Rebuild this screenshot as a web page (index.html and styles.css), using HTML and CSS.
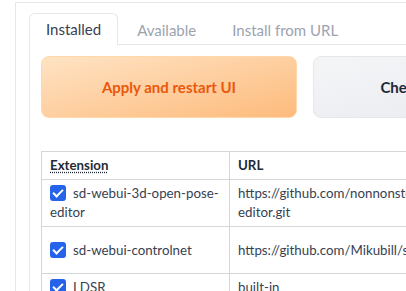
FILE: index.html
```html
<!DOCTYPE html>
<html>
<head>
<title>Extensions</title>
<meta content="width=device-width, initial-scale=1" name="viewport" />
<link rel="stylesheet" href="styles.css">
</head>

<body>
<div class='block'>
  <div class='tab-nav'>
    <button class='tab selected'>Installed</button>
    <button class='tab'>Available</button>
    <button class='tab'>Install from URL</button>
  </div>

  <div class='tab-panel'>
    <div class='btn-row'>
      <button class='btn btn-primary'>Apply and restart UI</button>
      <button class='btn btn-secondary'>Check for updates</button>
    </div>

    <table class='ext-table'>
      <thead>
        <tr>
          <th class='col-name'><abbr title='Use checkbox to enable the extension'>Extension</abbr></th>
          <th class='col-url'>URL</th>
          <th>Version</th>
        </tr>
      </thead>
      <tbody>
        <tr>
          <td><span class='check'></span>sd-webui-3d-open-pose-editor</td>
          <td>https://github.com/nonnonstop/sd-webui-3d-open-pose-editor.git</td>
          <td>8a9b1c2e</td>
        </tr>
        <tr class='row-tall'>
          <td><span class='check'></span>sd-webui-controlnet</td>
          <td>https://github.com/Mikubill/sd-webui-controlnet</td>
          <td>2c3e9f1a</td>
        </tr>
        <tr>
          <td><span class='check'></span>LDSR</td>
          <td>built-in</td>
          <td></td>
        </tr>
      </tbody>
    </table>
  </div>
</div>
</body>

</html>
```

FILE: styles.css
```css
html, body {
  margin: 0;
  padding: 0;
  overflow: hidden;
  background: #fff;
  font-family: "Lato", "Liberation Sans", sans-serif;
}
body {
  padding: 2px 0 0 15px;
}
.block {
  width: 760px;
  border: 1px solid #e5e7eb;
  padding: 10px 13px 20px;
}

/* tabs */
.tab-nav {
  display: flex;
  border-bottom: 1px solid #e5e7eb;
}
.tab {
  font-family: inherit;
  font-size: 15px;
  line-height: 20px;
  padding: 5px 16px;
  margin: 0 2px -1px 0;
  border: 1px solid transparent;
  border-bottom: none;
  border-radius: 6px 6px 0 0;
  background: none;
  color: #9ca3af;
}
.tab.selected {
  border-color: #e5e7eb;
  background: #fff;
  color: #374151;
  padding-bottom: 6px;
}
.tab-panel {
  border: 1px solid #e5e7eb;
  border-top: none;
  padding: 11px;
}

/* buttons */
.btn-row {
  display: flex;
  gap: 16px;
}
.btn {
  width: 256px;
  height: 62px;
  border-radius: 8px;
  font-family: inherit;
  font-size: 15px;
  font-weight: bold;
}
.btn-primary {
  border: 1px solid #fed7aa;
  background: linear-gradient(to bottom right, #ffe3c4, #fdbb7c);
  color: #ea580c;
}
.btn-secondary {
  border: 1px solid #e5e7eb;
  background: linear-gradient(to bottom right, #f4f5f7, #e9eaee);
  color: #1f2937;
}

/* extension table */
.ext-table {
  margin-top: 33px;
  border-collapse: collapse;
  font-size: 13.3px;
  line-height: 19px;
  color: #374151;
}
.ext-table th, .ext-table td {
  border: 1px solid #d4d6da;
  padding: 4px 8px;
  text-align: left;
  vertical-align: middle;
}
.ext-table th {
  color: #1f2937;
}
.ext-table abbr {
  text-decoration: underline dotted;
  text-underline-offset: 2px;
}
.col-name {
  width: 171px;
}
.col-url {
  width: 362px;
}
.row-tall td {
  height: 38px;
}
.check {
  display: inline-block;
  position: relative;
  width: 16px;
  height: 16px;
  margin-right: 7px;
  border-radius: 3px;
  background: #2563eb;
  vertical-align: -3px;
}
.check::after {
  content: '';
  position: absolute;
  left: 5px;
  top: 2px;
  width: 4px;
  height: 8px;
  border: solid #fff;
  border-width: 0 2px 2px 0;
  transform: rotate(45deg);
}
```
